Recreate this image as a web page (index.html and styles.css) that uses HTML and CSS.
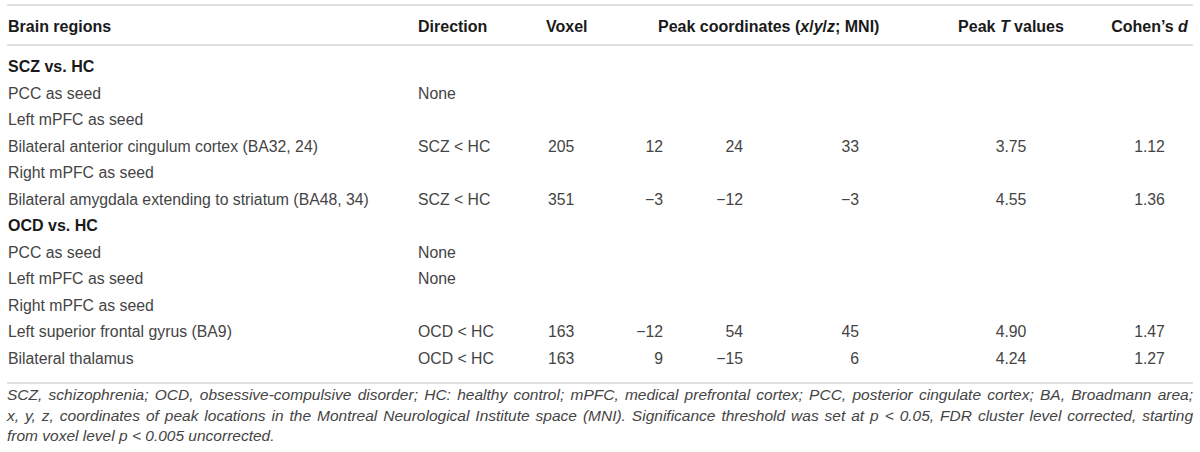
FILE: index.html
```html
<!DOCTYPE html>
<html lang="en">
<head>
    <meta charset="UTF-8">
    <title>Brain regions table</title>
    <link rel="stylesheet" href="styles.css">
</head>
<body>

    <div class="table-wrap">
        <table class="results">
            <colgroup>
                <col class="c-region">
                <col class="c-dir">
                <col class="c-voxel">
                <col class="c-x">
                <col class="c-y">
                <col class="c-z">
                <col class="c-t">
                <col class="c-d">
            </colgroup>
            <thead>
                <tr>
                    <th class="region">Brain regions</th>
                    <th class="dir">Direction</th>
                    <th class="voxel">Voxel</th>
                    <th class="coords" colspan="3">Peak coordinates (<i>x</i>/<i>y</i>/<i>z</i>; MNI)</th>
                    <th class="tval">Peak <i>T</i> values</th>
                    <th class="dval">Cohen’s <i>d</i></th>
                </tr>
            </thead>
            <tbody>
                <tr class="first">
                    <td class="region group" colspan="8">SCZ vs. HC</td>
                </tr>
                <tr>
                    <td class="region">PCC as seed</td>
                    <td class="dir">None</td>
                    <td colspan="6"></td>
                </tr>
                <tr>
                    <td class="region">Left mPFC as seed</td>
                    <td colspan="7"></td>
                </tr>
                <tr>
                    <td class="region">Bilateral anterior cingulum cortex (BA32, 24)</td>
                    <td class="dir">SCZ &lt; HC</td>
                    <td class="voxel">205</td>
                    <td class="num">12</td>
                    <td class="num">24</td>
                    <td class="num num-z">33</td>
                    <td class="tval">3.75</td>
                    <td class="dval">1.12</td>
                </tr>
                <tr>
                    <td class="region">Right mPFC as seed</td>
                    <td colspan="7"></td>
                </tr>
                <tr>
                    <td class="region">Bilateral amygdala extending to striatum (BA48, 34)</td>
                    <td class="dir">SCZ &lt; HC</td>
                    <td class="voxel">351</td>
                    <td class="num">−3</td>
                    <td class="num">−12</td>
                    <td class="num num-z">−3</td>
                    <td class="tval">4.55</td>
                    <td class="dval">1.36</td>
                </tr>
                <tr>
                    <td class="region group" colspan="8">OCD vs. HC</td>
                </tr>
                <tr>
                    <td class="region">PCC as seed</td>
                    <td class="dir">None</td>
                    <td colspan="6"></td>
                </tr>
                <tr>
                    <td class="region">Left mPFC as seed</td>
                    <td class="dir">None</td>
                    <td colspan="6"></td>
                </tr>
                <tr>
                    <td class="region">Right mPFC as seed</td>
                    <td colspan="7"></td>
                </tr>
                <tr>
                    <td class="region">Left superior frontal gyrus (BA9)</td>
                    <td class="dir">OCD &lt; HC</td>
                    <td class="voxel">163</td>
                    <td class="num">−12</td>
                    <td class="num">54</td>
                    <td class="num num-z">45</td>
                    <td class="tval">4.90</td>
                    <td class="dval">1.47</td>
                </tr>
                <tr class="last">
                    <td class="region">Bilateral thalamus</td>
                    <td class="dir">OCD &lt; HC</td>
                    <td class="voxel">163</td>
                    <td class="num">9</td>
                    <td class="num">−15</td>
                    <td class="num num-z">6</td>
                    <td class="tval">4.24</td>
                    <td class="dval">1.27</td>
                </tr>
            </tbody>
        </table>

        <p class="footnote">
            <span class="fn-line">SCZ, schizophrenia; OCD, obsessive-compulsive disorder; HC: healthy control; mPFC, medical prefrontal cortex; PCC, posterior cingulate cortex; BA, Broadmann area;</span>
            <span class="fn-line">x, y, z, coordinates of peak locations in the Montreal Neurological Institute space (MNI). Significance threshold was set at p &lt; 0.05, FDR cluster level corrected, starting</span>
            from voxel level p &lt; 0.005 uncorrected.
        </p>
    </div>

</body>
</html>
```

FILE: styles.css
```css
* {
    margin: 0;
    padding: 0;
    box-sizing: border-box;
}

body {
    background: #ffffff;
    font-family: "Liberation Sans", Arial, sans-serif;
    color: #444444;
}

.table-wrap {
    width: 1186px;
    margin-left: 7px;
    padding-top: 4px;
}

.results {
    width: 100%;
    border-collapse: collapse;
    table-layout: fixed;
    font-size: 15.8px;
}

.c-region { width: 408px; }
.c-dir { width: 128px; }
.c-voxel { width: 67px; }
.c-x { width: 60px; }
.c-y { width: 80px; }
.c-z { width: 190px; }
.c-t { width: 142px; }
.c-d { width: 111px; }

thead tr {
    border-top: 2px solid #e0e0e0;
    border-bottom: 2px solid #e0e0e0;
}

th {
    height: 40px;
    padding-top: 3px;
    font-size: 16px;
    font-weight: bold;
    color: #1a1a1a;
    text-align: left;
    white-space: nowrap;
    vertical-align: middle;
}

td {
    height: 26.5px;
    line-height: 26.5px;
    white-space: nowrap;
    vertical-align: middle;
}

.first td {
    padding-top: 8px;
    height: 34.5px;
}

.last {
    border-bottom: 2px solid #e0e0e0;
}

.last td {
    padding-bottom: 10px;
    height: 36.5px;
}

.region { padding-left: 1px; }
.dir { padding-left: 3px; }
.voxel { padding-left: 3px; }
td.voxel { padding-left: 5px; }

.coords { padding-left: 48px; }

.num {
    text-align: right;
    padding-right: 7px;
}

.num-z { padding-right: 81px; }

.tval { text-align: center; }

.dval {
    text-align: center;
    padding-left: 24px;
}

.group {
    font-weight: bold;
    font-size: 16px;
    color: #1a1a1a;
}

.footnote {
    margin-top: 1px;
    font-size: 15.5px;
    line-height: 20.5px;
    font-style: italic;
    color: #444444;
}

.fn-line {
    display: block;
    white-space: nowrap;
    text-align: justify;
    text-align-last: justify;
}
```
